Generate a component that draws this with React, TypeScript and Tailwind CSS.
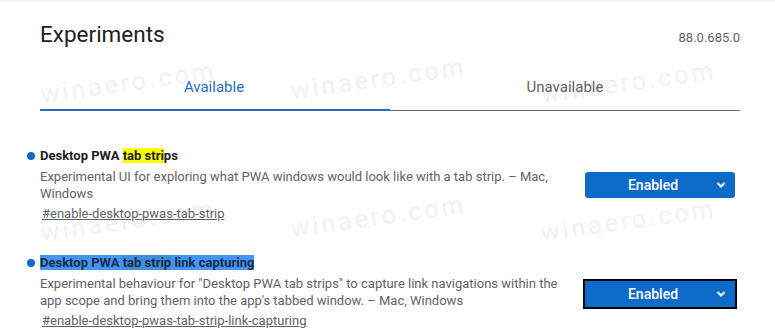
import React from "react";

const font = { fontFamily: "Roboto, 'Liberation Sans', sans-serif" };

function Chevron() {
  return (
    <svg width="10" height="7" viewBox="0 0 10 7" className="absolute right-[9px] top-1/2 -translate-y-1/2">
      <path d="M1.5 1.5 L5 5 L8.5 1.5" fill="none" stroke="white" strokeWidth="2" />
    </svg>
  );
}

function Select({ focused }: { focused?: boolean }) {
  return (
    <div
      className={`relative w-[150px] h-[26px] rounded-[3px] bg-[#0b6bc8] flex items-center justify-center text-white text-[14px] font-medium ${
        focused ? "outline outline-2 outline-black rounded-none" : ""
      }`}
    >
      <span className="mr-[14px]">Enabled</span>
      <Chevron />
    </div>
  );
}

function Watermark({ x, y }: { x: number; y: number }) {
  return (
    <div
      className="absolute pointer-events-none select-none text-[25px] tracking-[3px] text-[#f1f1f1] -rotate-[8deg]"
      style={{ left: x, top: y }}
    >
      winaero.com
    </div>
  );
}

export default function App() {
  return (
    <div className="relative w-[775px] h-[330px] bg-white overflow-hidden text-[#202124]" style={font}>
      <Watermark x={40} y={64} />
      <Watermark x={290} y={60} />
      <Watermark x={540} y={64} />
      <Watermark x={40} y={202} />
      <Watermark x={290} y={198} />
      <Watermark x={540} y={202} />

      <div className="relative">
        <div className="h-[2px] bg-[#f3f3f3]" />
        <div className="px-[40px] w-[780px]">
          <div className="flex items-end justify-between pt-[16px] h-[46px]">
            <h1 className="text-[22.5px] leading-[28px] text-[#202124]">Experiments</h1>
            <span className="text-[13px] text-[#5f6368] mb-[1px]">88.0.685.0</span>
          </div>
          <div className="flex mt-[29px] w-[700px]">
            <div className="flex-1 flex flex-col items-center">
              <span className="text-[15px] leading-[20px] text-[#2a6fba] ml-[-2px]">Available</span>
              <div className="mt-[12px] h-[2px] w-full bg-[#2a6fba]" />
            </div>
            <div className="flex-1 flex flex-col items-center">
              <span className="text-[15px] leading-[20px] text-[#5f6368]">Unavailable</span>
              <div className="mt-[13px] h-[1px] w-full bg-[#6b6b6b]" />
            </div>
          </div>

          <div className="mt-[36px] w-[700px] flex">
            <div className="flex-1 min-w-0 relative">
              <span className="absolute left-[-13px] top-[5px] w-[8px] h-[8px] rounded-full bg-[#0b6bc8]" />
              <div className="text-[13px] leading-[17px] font-bold text-[#202124]">
                Desktop PWA <span className="bg-[#ffff00]">tab stri</span>ps
              </div>
              <p className="mt-[4px] text-[13px] leading-[17px] text-[#5f6368] w-[515px]">
                Experimental UI for exploring what PWA windows would look like with a tab strip. – Mac, Windows
              </p>
              <div className="mt-[3px] ml-[2px] text-[13px] leading-[17px] text-[#5f6368] underline">
                #enable-desktop-pwas-tab-strip
              </div>
            </div>
            <div className="pt-[25px] pr-[5px]">
              <Select />
            </div>
          </div>

          <div className="mt-[32px] w-[700px] flex">
            <div className="flex-1 min-w-0 relative">
              <span className="absolute left-[-13px] top-[5px] w-[8px] h-[8px] rounded-full bg-[#0b6bc8]" />
              <div className="text-[13px] leading-[17px] font-bold text-[#1f2a44]">
                <span className="bg-[#4196f6]">
                  Desktop PWA <span className="bg-[#3d8edc]">tab strip</span> link capturing
                </span>
              </div>
              <p className="mt-[4px] text-[13px] leading-[17px] text-[#5f6368] w-[530px]">
                Experimental behaviour for "Desktop PWA tab strips" to capture link navigations within the app scope and bring them into the app's tabbed window. – Mac, Windows
              </p>
              <div className="mt-[3px] ml-[2px] text-[13px] leading-[17px] text-[#5f6368] underline">
                #enable-desktop-pwas-tab-strip-link-capturing
              </div>
            </div>
            <div className="pt-[27px] pr-[5px]">
              <Select focused />
            </div>
          </div>
        </div>
      </div>
    </div>
  );
}
